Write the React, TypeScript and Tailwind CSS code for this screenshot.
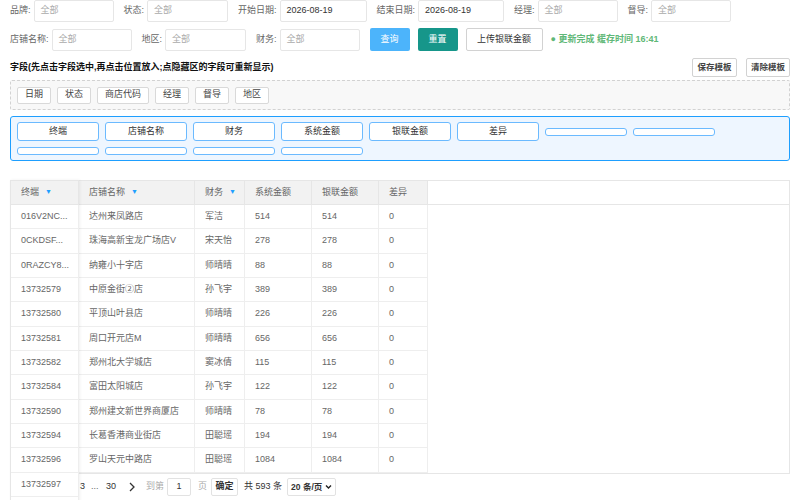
import React from 'react';

const font = { fontFamily: '"Liberation Sans", "Noto Sans CJK SC", sans-serif' };

const rows = [
  ['016V2NC...', '达州来凤路店', '军洁', '514', '514', '0'],
  ['0CKDSF...', '珠海高新宝龙广场店V', '宋天怡', '278', '278', '0'],
  ['0RAZCY8...', '纳雍小十字店', '师晴晴', '88', '88', '0'],
  ['13732579', '中原金街②店', '孙飞宇', '389', '389', '0'],
  ['13732580', '平顶山叶县店', '师晴晴', '226', '226', '0'],
  ['13732581', '周口开元店M', '师晴晴', '656', '656', '0'],
  ['13732582', '郑州北大学城店', '窦冰倩', '115', '115', '0'],
  ['13732584', '富田太阳城店', '孙飞宇', '122', '122', '0'],
  ['13732590', '郑州建文新世界商厦店', '师晴晴', '78', '78', '0'],
  ['13732594', '长葛香港商业街店', '田聪瑶', '194', '194', '0'],
  ['13732596', '罗山天元中路店', '田聪瑶', '1084', '1084', '0'],
];

const colW = ['w-[68px]', 'w-[116px]', 'w-[50px]', 'w-[67px]', 'w-[67px]', 'w-[49px]'];

function Field({ label, value, w, ph = true }: { label: string; value: string; w: string; ph?: boolean }) {
  return (
    <div className="flex items-center">
      <span className="mr-[3px] text-[9px] text-[#666]">{label}</span>
      <div className={`flex h-[22px] items-center rounded-[2px] border border-[#e6e6e6] bg-white pl-[6px] text-[9px] ${w} ${ph ? 'text-[#aaa]' : 'text-[#333]'}`}>
        {value}
      </div>
    </div>
  );
}

function Filter() {
  return <span className="ml-[6px] text-[7px] text-[#1e9fff]">▼</span>;
}

export default function App() {
  const headers = ['终端', '店铺名称', '财务', '系统金额', '银联金额', '差异'];
  return (
    <div className="relative h-[500px] w-[800px] overflow-hidden bg-white" style={font}>
      <div className="flex flex-col gap-[6px] px-[10px]">
        <div className="flex gap-[10px]">
          <Field label="品牌:" value="全部" w="w-[80px]" />
          <Field label="状态:" value="全部" w="w-[81px]" />
          <Field label="开始日期:" value="2026-08-19" w="w-[87px]" ph={false} />
          <Field label="结束日期:" value="2026-08-19" w="w-[86px]" ph={false} />
          <Field label="经理:" value="全部" w="w-[80px]" />
          <Field label="督导:" value="全部" w="w-[80px]" />
        </div>
        <div className="flex items-center gap-[10px]">
          <Field label="店铺名称:" value="全部" w="w-[80px]" />
          <Field label="地区:" value="全部" w="w-[81px]" />
          <Field label="财务:" value="全部" w="w-[80px]" />
          <div className="flex items-center gap-[8px]">
            <button className="h-[23px] w-[40px] rounded-[2px] bg-[#4cb4fb] text-[9px] text-white">查询</button>
            <button className="h-[23px] w-[40px] rounded-[2px] bg-[#16968a] text-[9px] text-white">重置</button>
            <button className="h-[23px] w-[77px] rounded-[2px] border border-[#d2d2d2] bg-white text-[9px] text-[#333]">上传银联金额</button>
            <span className="text-[9px] font-bold text-[#5fb878]">● 更新完成 缓存时间 16:41</span>
          </div>
        </div>
      </div>

      <div className="mx-[10px] mt-[7px] flex h-[19px] items-center justify-between">
        <span className="text-[9px] font-bold text-[#111]">字段(先点击字段选中,再点击位置放入;点隐藏区的字段可重新显示)</span>
        <div className="flex gap-[9px]">
          <button className="h-[19px] w-[45px] rounded-[2px] border border-[#d2d2d2] bg-white text-[8.5px] font-semibold text-[#444]">保存模板</button>
          <button className="h-[19px] w-[44px] rounded-[2px] border border-[#d2d2d2] bg-white text-[8.5px] font-semibold text-[#444]">清除模板</button>
        </div>
      </div>

      <div className="mx-[10px] mt-[3px] flex h-[30px] items-center gap-[6px] rounded-[2px] border border-dashed border-[#d2d2d2] bg-[#f8f8f8] px-[6px]">
        {['日期', '状态', '商店代码', '经理', '督导', '地区'].map((t) => (
          <span key={t} className="flex h-[17px] items-center rounded-[2px] border border-[#d9d9d9] bg-white px-[7px] text-[9px] text-[#444]">{t}</span>
        ))}
      </div>

      <div className="mx-[10px] mt-[6px] flex h-[45px] flex-wrap content-start items-center gap-[6px] rounded-[3px] border border-[#1e9fff] bg-[#eef6ff] px-[6px] pt-[5px]">
        {['终端', '店铺名称', '财务', '系统金额', '银联金额', '差异'].map((t) => (
          <span key={t} className="flex h-[19px] w-[82px] items-center justify-center rounded-[3px] border border-[#6bbaff] bg-white text-[9px] text-[#333]">{t}</span>
        ))}
        <span className="h-[8px] w-[82px] rounded-[3px] border border-[#6bbaff] bg-white" />
        <span className="h-[8px] w-[82px] rounded-[3px] border border-[#6bbaff] bg-white" />
        {[0, 1, 2, 3].map((i) => (
          <span key={i} className="h-[8px] w-[82px] rounded-[3px] border border-[#6bbaff] bg-white" />
        ))}
      </div>

      <div className="relative mx-[10px] mt-[19px] h-[294px] border border-[#e6e6e6]">
        <div className="flex h-[24px] border-b border-[#e6e6e6] bg-[#f2f2f2]">
          {headers.map((h, i) => (
            <div key={h} className={`flex items-center border-r border-[#e6e6e6] pl-[10px] text-[9px] text-[#666] ${colW[i]}`}>
              {h}
              {i < 3 && <Filter />}
            </div>
          ))}
          <div className="flex-1 bg-white" />
        </div>
        {rows.map((r) => (
          <div key={r[0]} className="flex h-[24.35px] w-fit border-b border-[#eeeeee]">
            {r.map((c, i) => (
              <div key={i} className={`flex items-center border-r border-[#eeeeee] pl-[10px] text-[9px] text-[#666] ${colW[i]}`}>{c}</div>
            ))}
          </div>
        ))}

        <div className="absolute left-[-1px] top-[-1px] w-[69px] border-l border-[#e6e6e6] bg-white shadow-[1px_0_3px_rgba(0,0,0,0.06)]">
          <div className="flex h-[25px] items-center border-y border-r border-[#e6e6e6] bg-[#f2f2f2] pl-[10px] text-[9px] text-[#666]">
            终端
            <Filter />
          </div>
          {[...rows.map((r) => r[0]), '13732597', ''].map((c, i) => (
            <div key={i} className="flex h-[24.35px] items-center border-b border-r border-[#eeeeee] pl-[10px] text-[9px] text-[#666]">{c}</div>
          ))}
        </div>
      </div>

      <div className="flex h-[26px] items-center pl-[10px] text-[9px] text-[#333]">
        <div className="w-[70px]" />
        <span>3</span>
        <span className="ml-[6px] w-[13px] text-[#666]">...</span>
        <span className="ml-[2px]">30</span>
        <svg className="ml-[12px] h-[10px] w-[8px]" viewBox="0 0 8 10" fill="none" stroke="#333" strokeWidth="1.3">
          <path d="M2 1l4 4-4 4" />
        </svg>
        <span className="ml-[10px] text-[#aaa]">到第</span>
        <span className="ml-[3px] flex h-[18px] w-[24px] items-center justify-center rounded-[2px] border border-[#e2e2e2]">1</span>
        <span className="ml-[7px] text-[#aaa]">页</span>
        <span className="ml-[4px] flex h-[18px] w-[27px] items-center justify-center rounded-[2px] border border-[#e2e2e2] font-semibold">确定</span>
        <span className="ml-[6px]">共 593 条</span>
        <span className="ml-[5px] flex h-[18px] w-[49px] items-center justify-between whitespace-nowrap rounded-[2px] border border-[#e2e2e2] px-[3px] text-[8.5px] font-semibold">
          20 条/页
          <svg className="h-[6px] w-[7px] shrink-0" viewBox="0 0 7 6" fill="none" stroke="#222" strokeWidth="1.4">
            <path d="M1 1.5l2.5 2.5 2.5-2.5" />
          </svg>
        </span>
      </div>
    </div>
  );
}
